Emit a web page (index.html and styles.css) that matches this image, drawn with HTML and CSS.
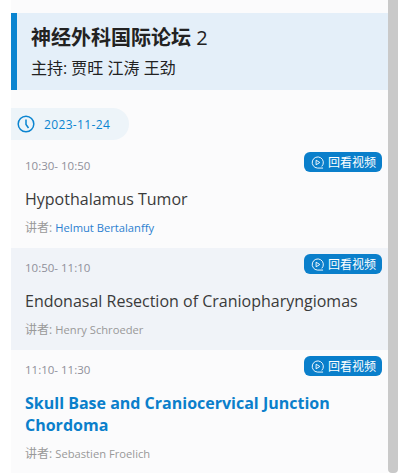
FILE: index.html
```html
<!DOCTYPE html>
<html lang="zh">
<head>
<meta charset="utf-8">
<title>神经外科国际论坛 2</title>
<link rel="stylesheet" href="styles.css">
</head>
<body>
<div class="page">
  <main class="content">
    <header class="banner">
      <h1 class="banner-title">神经外科国际论坛 <span class="banner-num">2</span></h1>
      <p class="banner-sub">主持: 贾旺 江涛 王劲</p>
    </header>
    <div class="date-pill">
      <svg class="clock" viewBox="0 0 18 18" width="18" height="18"><circle cx="9" cy="9" r="7.8" fill="none" stroke="#0a84d0" stroke-width="1.5"/><path d="M9 4.5V9.5L11.5 13" fill="none" stroke="#0a84d0" stroke-width="1.5"/></svg>
      <span>2023-11-24</span>
    </div>
    <section class="talk">
      <a class="replay"><svg class="play" viewBox="0 0 14 14" width="13" height="13"><path d="M11.6 11.2A6 6 0 1 0 7 13H13" fill="none" stroke="#fff" stroke-width="1"/><path d="M5.5 4.5L9.5 7L5.5 9.5Z" fill="none" stroke="#fff" stroke-width="1"/></svg>回看视频</a>
      <div class="time">10:30- 10:50</div>
      <h2 class="title">Hypothalamus Tumor</h2>
      <div class="speaker">讲者: <span class="name link">Helmut Bertalanffy</span></div>
    </section>
    <section class="talk alt">
      <a class="replay"><svg class="play" viewBox="0 0 14 14" width="13" height="13"><path d="M11.6 11.2A6 6 0 1 0 7 13H13" fill="none" stroke="#fff" stroke-width="1"/><path d="M5.5 4.5L9.5 7L5.5 9.5Z" fill="none" stroke="#fff" stroke-width="1"/></svg>回看视频</a>
      <div class="time">10:50- 11:10</div>
      <h2 class="title">Endonasal Resection of Craniopharyngiomas</h2>
      <div class="speaker">讲者: <span class="name">Henry Schroeder</span></div>
    </section>
    <section class="talk">
      <a class="replay"><svg class="play" viewBox="0 0 14 14" width="13" height="13"><path d="M11.6 11.2A6 6 0 1 0 7 13H13" fill="none" stroke="#fff" stroke-width="1"/><path d="M5.5 4.5L9.5 7L5.5 9.5Z" fill="none" stroke="#fff" stroke-width="1"/></svg>回看视频</a>
      <div class="time">11:10- 11:30</div>
      <h2 class="title active">Skull Base and Craniocervical Junction Chordoma</h2>
      <div class="speaker">讲者: <span class="name">Sebastien Froelich</span></div>
    </section>
  </main>
  <div class="scrollbar"></div>
</div>
</body>
</html>
```
FILE: styles.css
```css
* { box-sizing: border-box; }
html, body { margin: 0; height: 100%; overflow: hidden; background: #fff; }
body { font-family: "Open Sans", "Noto Sans", "Noto Sans CJK SC", sans-serif; }
.page { display: flex; height: 473px; padding-left: 11px; padding-right: 7px; }
.content { width: 377px; background: #fbfbfc; padding-top: 13px; overflow: hidden; }
.scrollbar { width: 10px; background: #c9c9c9; border-radius: 0 0 4px 4px; height: 473px; }
.banner { height: 77px; background: #e4eff9; border-left: 6px solid #0a84d0; padding: 10px 0 0 14px; }
.banner-title { margin: 0; font-size: 20px; line-height: 30px; font-weight: 700; color: #222; }
.banner-num { font-weight: 500; }
.banner-sub { margin: 3px 0 0; font-size: 16px; line-height: 24px; color: #222; }
.date-pill { display: flex; align-items: center; gap: 9px; width: 118px; height: 32px; margin: 18px 0 6px; padding-left: 6px; background: #edf4f9; border-radius: 0 16px 16px 0; color: #0a84d0; font-size: 12px; letter-spacing: 0.35px; }
.talk { position: relative; padding: 11px 6px 0 14px; min-height: 102px; }
.talk.alt { background: #f0f3f8; }
.replay { position: absolute; top: 6px; right: 6px; display: flex; align-items: center; gap: 4px; height: 20px; padding: 0 6px 0 7px; background: #0a7fcb; border-radius: 6px; color: #fff; font-size: 12px; }
.time { font-size: 11.5px; line-height: 18px; color: #8f8f9a; }
.title { margin: 13px 0 0; font-size: 16px; line-height: 22px; font-weight: 400; color: #3a3a3a; }
.title.active { font-weight: 700; color: #0a7fcb; }
.speaker { margin-top: 10px; font-size: 12px; line-height: 16px; color: #999; }
.name { font-size: 11.2px; }
.link { color: #2b7fd0; }
```
